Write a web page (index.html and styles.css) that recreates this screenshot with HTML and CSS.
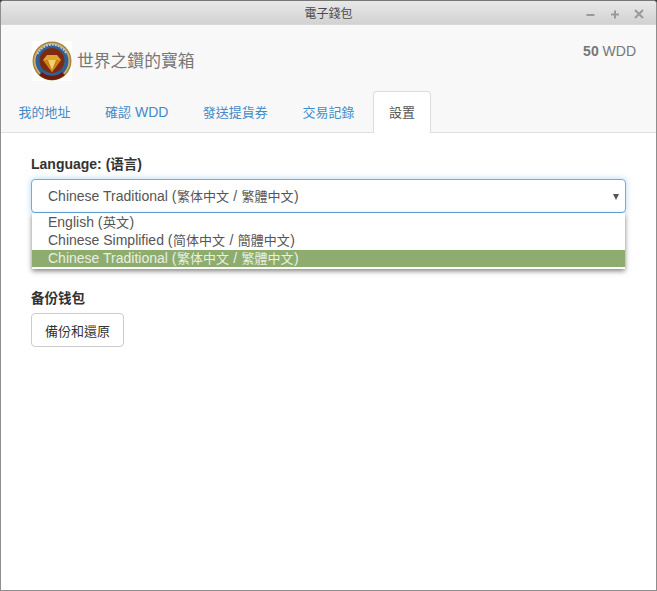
FILE: index.html
```html
<!DOCTYPE html>
<html lang="zh-Hant">
<head>
<meta charset="utf-8">
<title>電子錢包</title>
<link rel="stylesheet" href="styles.css">
</head>
<body>
<div class="window">
  <div class="titlebar">
    <span class="title">電子錢包</span>
    <div class="controls">
      <svg class="ctl" width="12" height="12" viewBox="0 0 12 12"><path d="M1.500 7h8" /></svg>
      <svg class="ctl" width="12" height="12" viewBox="0 0 12 12"><path d="M2 6.500h8M6 2.500v8" /></svg>
      <svg class="ctl" width="12" height="12" viewBox="0 0 12 12"><path d="M2 2l8 8M10 2l-8 8" /></svg>
    </div>
  </div>
  <header class="header">
    <div class="top">
      <div class="brand">
        <svg class="logo" width="40" height="40" viewBox="0 0 40 40">
          <rect width="40" height="40" fill="#fff"/>
          <circle cx="20" cy="20" r="19.500" fill="#a8843e"/>
          <circle cx="20" cy="20" r="18" fill="#cdb06a"/>
          <circle cx="20" cy="20" r="16.500" fill="#2f6097"/>
          <path d="M7 34a19.500 19.500 0 0 0 26 0l-3-3a15 15 0 0 1-20 0z" fill="#6b1c10"/>
          <circle cx="20" cy="19.500" r="12.500" fill="#7e2a10"/>
          <path d="M11 19l4-5h10l4 5-9 12z" fill="#e2a52b"/>
          <path d="M11 19h18l-9 12z" fill="#c9821c"/>
          <path d="M16 19h8l-4 10z" fill="#f3d267"/>
          <path d="M5.500 13a16 16 0 0 1 29 0" fill="none" stroke="#b7c9dc" stroke-width="2" stroke-dasharray="2 1"/>
        </svg>
        <span class="brand-name">世界之鑽的寶箱</span>
      </div>
      <div class="balance"><b>50</b> WDD</div>
    </div>
    <nav class="tabs">
      <a class="tab"><span class="cjk">我的地址</span></a>
      <a class="tab"><span class="cjk">確認</span> WDD</a>
      <a class="tab"><span class="cjk">發送提貨券</span></a>
      <a class="tab"><span class="cjk">交易記錄</span></a>
      <a class="tab active"><span class="cjk">設置</span></a>
    </nav>
  </header>
  <main class="content">
    <section class="group lang">
      <div class="label">Language: (<span class="cjk">语言</span>)</div>
      <div class="select">
        <span class="value">Chinese Traditional (<span class="cjk">繁体中文</span> / <span class="cjk">繁體中文</span>)</span>
        <i class="caret"></i>
        <ul class="options">
          <li>English (<span class="cjk">英文</span>)</li>
          <li>Chinese Simplified (<span class="cjk">简体中文</span> / <span class="cjk">簡體中文</span>)</li>
          <li class="selected">Chinese Traditional (<span class="cjk">繁体中文</span> / <span class="cjk">繁體中文</span>)</li>
        </ul>
      </div>
    </section>
    <section class="group">
      <div class="label"><span class="cjk">备份钱包</span></div>
      <button class="btn"><span class="cjk">備份和還原</span></button>
    </section>
  </main>
</div>
</body>
</html>
```
FILE: styles.css
```css
* { box-sizing: border-box; }
html, body { margin: 0; height: 100%; background: #3a3a3a; }
body {
  font-family: "Liberation Sans", "Noto Sans CJK TC", sans-serif;
  font-size: 14px;
  color: #333;
}
.cjk { font-size: 13px; }
.window {
  height: 591px;
  display: flex;
  flex-direction: column;
  background: #fff;
  border: 1px solid #8e8e8e;
  border-top-color: #777;
  border-radius: 4px 4px 0 0;
  overflow: hidden;
}
.titlebar {
  height: 24px;
  flex: none;
  display: flex;
  align-items: center;
  justify-content: center;
  position: relative;
  background: linear-gradient(#e8e8e8, #d2d2d2);
  border-bottom: 1px solid #d8d8d8;
}
.title { font-size: 12px; color: #4a4a4a; }
.controls {
  position: absolute;
  right: 11px;
  top: 7px;
  display: flex;
  gap: 12px;
}
.ctl { display: block; fill: none; stroke: #999; stroke-width: 2; }
.header {
  flex: none;
  height: 108px;
  background: #f8f8f8;
  border-bottom: 1px solid #e0e0e0;
  display: flex;
  flex-direction: column;
  justify-content: space-between;
}
.top {
  display: flex;
  justify-content: space-between;
  padding: 16px 20px 0 31px;
}
.brand { display: flex; align-items: center; gap: 5px; }
.logo { display: block; flex: none; }
.brand-name { font-size: 16.800px; color: #777; padding-bottom: 3px; }
.balance { color: #777; line-height: 20px; }
.tabs {
  display: flex;
  gap: 2.500px;
  padding-left: 1.500px;
  margin-bottom: -1px;
}
.tab {
  padding: 10px 15px;
  line-height: 20px;
  color: #428bca;
  border: 1px solid transparent;
  border-bottom: 0;
  border-radius: 4px 4px 0 0;
  height: 42px;
}
.tab.active {
  color: #555;
  background: #fff;
  border-color: #ddd;
}
.content { flex: 1; padding: 21px 30px 0; }
.group { display: flex; flex-direction: column; align-items: flex-start; }
.lang { margin-bottom: 75px; }
.label { font-weight: bold; line-height: 20px; margin-bottom: 4px; }
.label .cjk { font-size: 13.500px; }
.select {
  position: relative;
  width: 100%;
  height: 34px;
  padding: 0 16px 2px;
  display: flex;
  align-items: center;
  background: #fff;
  color: #555;
  border: 1px solid #66afe9;
  border-radius: 4px;
  box-shadow: 0 0 6px rgba(102, 175, 233, .5);
}
.value .cjk, .options .cjk { margin: 0 .5px; }
.caret {
  position: absolute;
  right: 6px;
  top: 14px;
  border: 3.500px solid transparent;
  border-top: 6px solid #555;
  border-bottom: 0;
}
.options {
  position: absolute;
  left: 0;
  right: 0;
  top: 33px;
  margin: 0;
  padding: 0 0 2px;
  list-style: none;
  background: #fff;
  box-shadow: 0 2px 5px rgba(0, 0, 0, .5);
}
.options li {
  height: 18px;
  line-height: 18px;
  padding-left: 16px;
}
.options .selected {
  height: 17px;
  margin-top: 1px;
  line-height: 16px;
  background: #8fac6f;
  color: #e8f0e0;
}
.btn {
  height: 34px;
  padding: 0 13px;
  font: inherit;
  color: #333;
  background: #fff;
  border: 1px solid #ccc;
  border-radius: 4px;
}
```
